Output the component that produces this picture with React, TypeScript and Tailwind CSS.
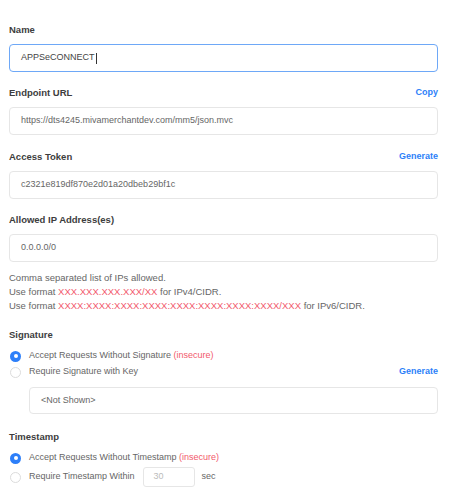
import React from 'react';

const font = { fontFamily: '"Liberation Sans", Arial, sans-serif' };

const Label = ({ text, action }: { text: string; action?: string }) => (
  <div className="flex items-center justify-between h-[14px] mb-[7px]">
    <span className="text-[9.5px] font-bold text-[#3d3d3d]">{text}</span>
    {action && <span className="text-[9px] font-bold text-[#2d7ff9]">{action}</span>}
  </div>
);

const Field = ({ value, focused }: { value: string; focused?: boolean }) => (
  <div
    className={`h-[28px] rounded-[4px] border flex items-center pl-[11px] text-[9px] ${
      focused ? 'border-[#6ea8f7] text-[#444]' : 'border-[#e6e6e6] text-[#666]'
    }`}
  >
    {value}
    {focused && <span className="inline-block w-px h-[11px] bg-[#333] ml-px" />}
  </div>
);

const Radio = ({ checked }: { checked?: boolean }) =>
  checked ? (
    <span className="w-[11px] h-[11px] rounded-full bg-[#2d7ff9] flex items-center justify-center shrink-0">
      <span className="w-[4px] h-[4px] rounded-full bg-white" />
    </span>
  ) : (
    <span className="w-[11px] h-[11px] rounded-full border border-[#dcdcdc] bg-white shrink-0" />
  );

export default function App() {
  return (
    <div className="w-[450px] h-[503px] bg-white pl-[9px] pr-[12px] pt-[23px]" style={font}>
      <Label text="Name" />
      <Field value="APPSeCONNECT" focused />

      <div className="mt-[14px]">
        <Label text="Endpoint URL" action="Copy" />
        <Field value="https://dts4245.mivamerchantdev.com/mm5/json.mvc" />
      </div>

      <div className="mt-[15px]">
        <Label text="Access Token" action="Generate" />
        <Field value="c2321e819df870e2d01a20dbeb29bf1c" />
      </div>

      <div className="mt-[14px]">
        <Label text="Allowed IP Address(es)" />
        <Field value="0.0.0.0/0" />
      </div>

      <div className="mt-[9px] text-[9.5px] leading-[14px] text-[#666]">
        <div>Comma separated list of IPs allowed.</div>
        <div>
          Use format <span className="text-[#f2596b]">XXX.XXX.XXX.XXX/XX</span> for IPv4/CIDR.
        </div>
        <div>
          Use format <span className="text-[#f2596b]">XXXX:XXXX:XXXX:XXXX:XXXX:XXXX:XXXX:XXXX/XXX</span> for IPv6/CIDR.
        </div>
      </div>

      <div className="mt-[15px] h-[14px] text-[9.5px] font-bold text-[#3d3d3d] flex items-center">Signature</div>
      <div className="mt-[6px] text-[9px] text-[#666]">
        <div className="flex items-center gap-[8px] h-[16px] pl-px">
          <Radio checked />
          <span>
            Accept Requests Without Signature <span className="text-[#f2596b]">(insecure)</span>
          </span>
        </div>
        <div className="flex items-center justify-between h-[16px] pl-px">
          <div className="flex items-center gap-[8px]">
            <Radio />
            <span>Require Signature with Key</span>
          </div>
          <span className="font-bold text-[#2d7ff9]">Generate</span>
        </div>
        <div className="mt-[7px] ml-[20px] h-[27px] rounded-[4px] border border-[#e6e6e6] flex items-center pl-[11px] text-[#666]">
          &lt;Not Shown&gt;
        </div>
      </div>

      <div className="mt-[16px] h-[14px] text-[9.5px] font-bold text-[#3d3d3d] flex items-center">Timestamp</div>
      <div className="mt-[6px] text-[9px] text-[#666]">
        <div className="flex items-center gap-[8px] h-[16px] pl-px">
          <Radio checked />
          <span>
            Accept Requests Without Timestamp <span className="text-[#f2596b]">(insecure)</span>
          </span>
        </div>
        <div className="mt-px flex items-center gap-[8px] h-[20px] pl-px">
          <Radio />
          <span>Require Timestamp Within</span>
          <div className="w-[52px] h-[20px] rounded-[3px] border border-[#e6e6e6] flex items-center pl-[10px] text-[#bbb]">
            30
          </div>
          <span className="ml-[-1px]">sec</span>
        </div>
      </div>
    </div>
  );
}
